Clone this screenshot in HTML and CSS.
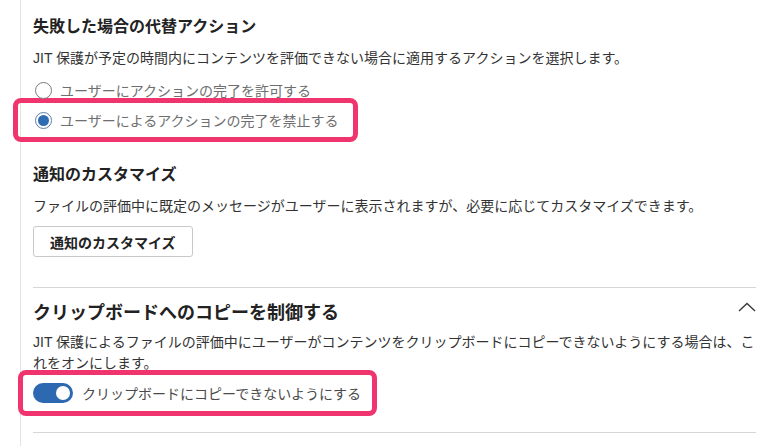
FILE: index.html
```html
<!DOCTYPE html>
<html lang="ja">
<head>
  <meta charset="UTF-8" />
  <meta name="viewport" content="width=device-width, initial-scale=1" />
  <title>JIT 保護の設定</title>
  <link rel="stylesheet" href="styles.css">
</head>
<body>
  <div class="panel">

    <section class="block block-first">
      <h2 class="title">失敗した場合の代替アクション</h2>
      <p class="desc">JIT 保護が予定の時間内にコンテンツを評価できない場合に適用するアクションを選択します。</p>

      <label class="radio">
        <span class="dot"></span>
        <span class="radio-text">ユーザーにアクションの完了を許可する</span>
      </label>
      <label class="radio checked mark mark-radio">
        <span class="dot"></span>
        <span class="radio-text">ユーザーによるアクションの完了を禁止する</span>
      </label>
    </section>

    <section class="block block-notify">
      <h2 class="title">通知のカスタマイズ</h2>
      <p class="desc">ファイルの評価中に既定のメッセージがユーザーに表示されますが、必要に応じてカスタマイズできます。</p>
      <button class="btn">通知のカスタマイズ</button>
    </section>

    <section class="block block-clip">
      <div class="head">
        <h2 class="title title-lg">クリップボードへのコピーを制御する</h2>
        <svg class="chev" width="18" height="10" viewBox="0 0 18 10">
          <polyline points="1,9 9,1.5 17,9" fill="none" stroke="#3a3a3a" stroke-width="1.4" />
        </svg>
      </div>
      <p class="desc desc-wrap">JIT 保護によるファイルの評価中にユーザーがコンテンツをクリップボードにコピーできないようにする場合は、これをオンにします。</p>

      <label class="toggle-row mark mark-toggle">
        <span class="toggle on"><span class="knob"></span></span>
        <span class="toggle-text">クリップボードにコピーできないようにする</span>
      </label>
    </section>

  </div>
</body>
</html>
```

FILE: styles.css
```css
body {
  margin: 0;
  background: #fff;
  font-family: "Liberation Sans", "Noto Sans CJK JP", sans-serif;
  color: #222;
}

.panel {
  margin-left: 20px;
  border-left: 1px solid #e2e2e2;
  padding: 0 21px 0 12px;
  min-height: 100vh;
  box-sizing: border-box;
}

.block {
  border-bottom: 1px solid #d6d6d6;
}

.block-first {
  padding-top: 16px;
  padding-bottom: 34px;
  border-bottom: none;
}

.block-notify {
  padding-bottom: 30px;
}

.block-clip {
  padding-top: 13px;
  padding-bottom: 29px;
}

.title {
  margin: 0;
  font-size: 16px;
  line-height: 22px;
  font-weight: bold;
  color: #222;
}

.title-lg {
  font-size: 18px;
  line-height: 24px;
}

.head {
  display: flex;
  justify-content: space-between;
  align-items: flex-start;
}

.chev {
  margin-top: 1px;
  display: block;
}

.desc {
  margin: 10px 0 0;
  font-size: 14px;
  line-height: 20px;
  color: #333;
}

.desc-wrap {
  margin-top: 7px;
  line-height: 20.5px;
}

/* radio rows */
.radio {
  display: flex;
  align-items: center;
  gap: 8px;
  height: 20px;
  margin-top: 12px;
  font-size: 14px;
  color: #6e6e6e;
}

.dot {
  width: 15px;
  height: 15px;
  border: 1px solid #7a7a7a;
  border-radius: 50%;
  margin-left: 2px;
  box-sizing: content-box;
  position: relative;
  background: #fff;
}

.checked .dot {
  border-color: #5c7ea6;
}

.checked .dot::after {
  content: "";
  position: absolute;
  inset: 2px;
  border-radius: 50%;
  background: #2f6db3;
}

/* pink annotation boxes */
.mark {
  width: fit-content;
  outline: 5px solid #f0346e;
  border-radius: 3px;
}

.mark-radio {
  padding: 7px 14px 7px 15px;
  margin-left: -15px;
  margin-bottom: -7px;
}

.radio.mark-radio {
  margin-top: 3px;
  height: 20px;
}

/* button */
.btn {
  display: block;
  margin-top: 10px;
  height: 31px;
  padding: 0 16px;
  border: 1px solid #c9c9c9;
  border-radius: 3px;
  background: #fff;
  font-family: inherit;
  font-size: 14px;
  font-weight: bold;
  color: #222;
}

/* toggle */
.toggle-row {
  display: flex;
  align-items: center;
  gap: 9px;
  height: 20px;
  margin-top: 12px;
  font-size: 14px;
  color: #4a4a4a;
}

.mark-toggle {
  padding: 8px 11px 8px 10px;
  margin: 2px 0 -8px -10px;
}

.toggle {
  width: 40px;
  height: 20px;
  border-radius: 10px;
  background: #bbb;
  display: flex;
  align-items: center;
  padding: 0 3px;
  box-sizing: border-box;
}

.toggle.on {
  background: #2d69b0;
  justify-content: flex-end;
}

.knob {
  width: 14px;
  height: 14px;
  border-radius: 50%;
  background: #fff;
}
```
